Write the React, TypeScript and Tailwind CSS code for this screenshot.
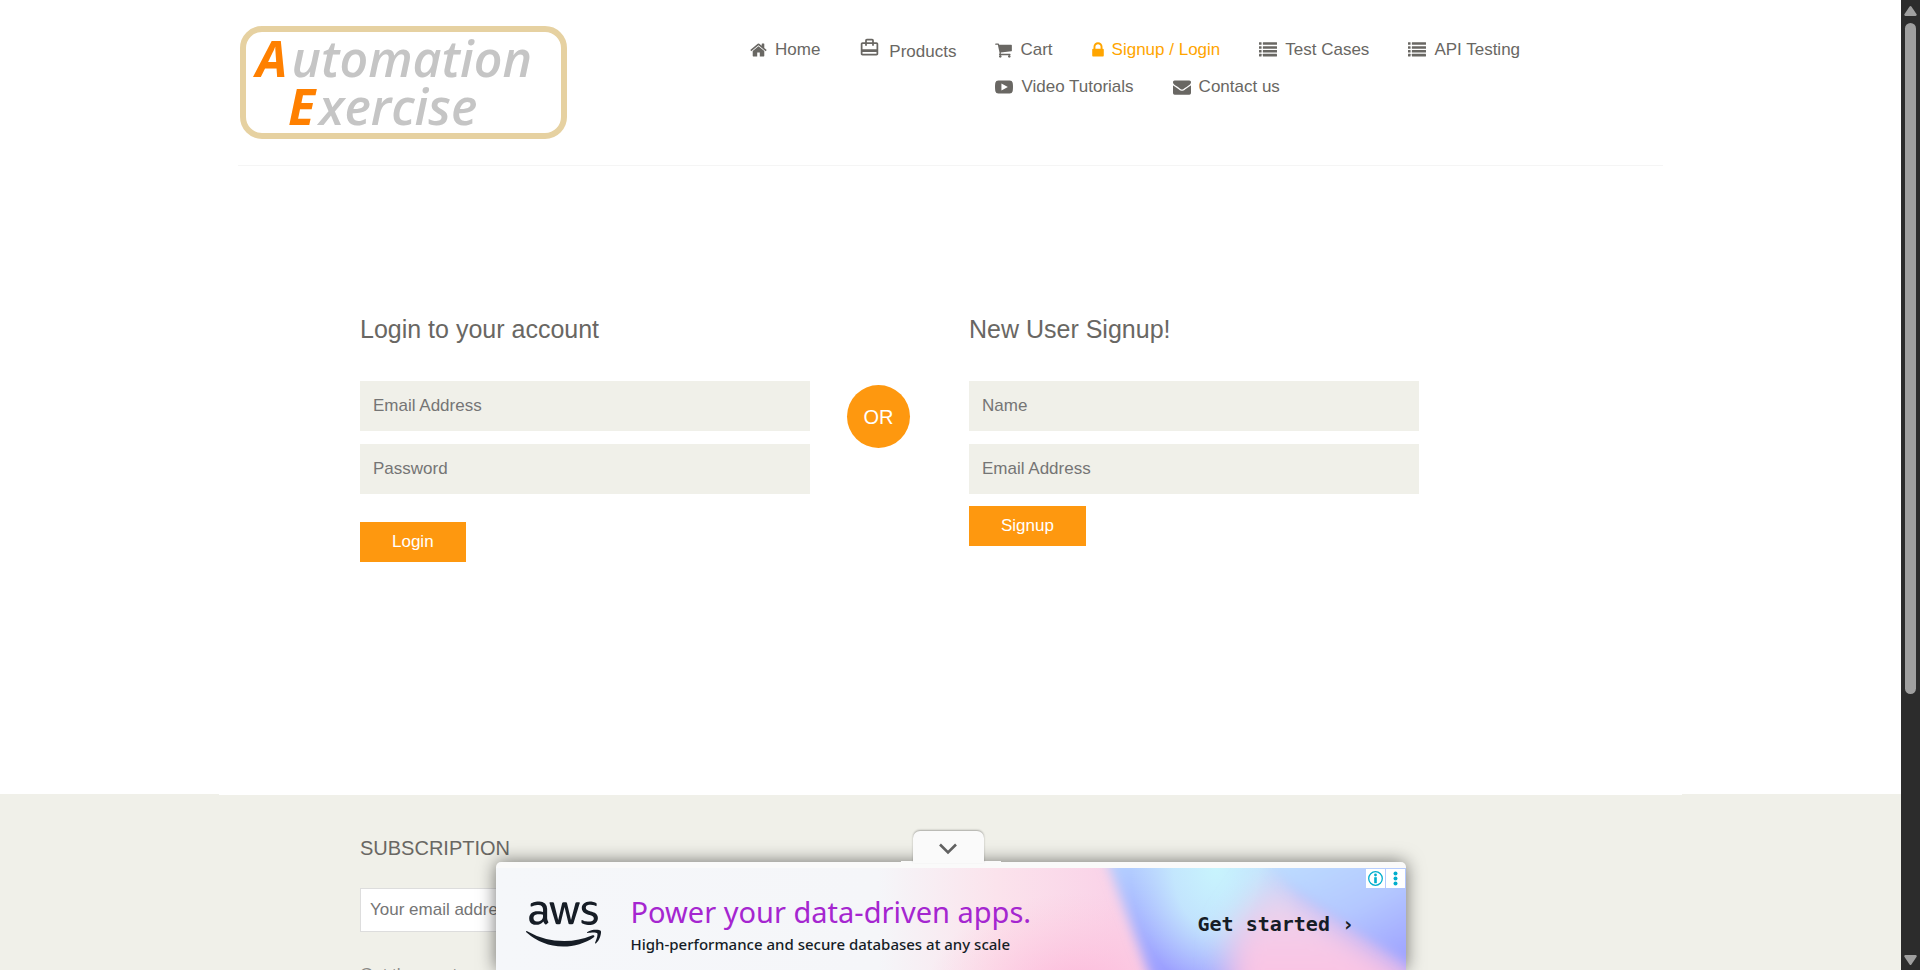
import type { ReactNode } from "react";
import { MdCardTravel } from "react-icons/md";
import { FaAws } from "react-icons/fa";

function HomeIcon() {
  return (
    <svg viewBox="64 0 1664 1792" className="h-[18px] w-[17px] fill-current" aria-hidden="true">
      <path d="M1472 992v480q0 26-19 45t-45 19h-384v-384h-256v384h-384q-26 0-45-19t-19-45v-480q0-1 .5-3t.5-3l575-474 575 474q1 2 1 6zm223-69l-62 74q-8 9-21 11h-3q-13 0-21-7l-692-577-692 577q-12 8-24 7-13-2-21-11l-62-74q-8-10-7-23.5t11-21.5l719-599q32-26 76-26t76 26l244 204v-195q0-14 9-23t23-9h192q14 0 23 9t9 23v408l219 182q10 8 11 21.5t-7 23.5z" />
    </svg>
  );
}

function CartIcon() {
  return (
    <svg viewBox="64 0 1664 1792" className="h-[18px] w-[17px] fill-current" aria-hidden="true">
      <path d="M704 1536q0 52-38 90t-90 38-90-38-38-90 38-90 90-38 90 38 38 90zm896 0q0 52-38 90t-90 38-90-38-38-90 38-90 90-38 90 38 38 90zm128-1088v512q0 24-16.5 42.5t-40.5 21.5l-1044 122q13 60 13 70 0 16-24 64h920q26 0 45 19t19 45-19 45-45 19h-1024q-26 0-45-19t-19-45q0-11 8-31.5t16-36 21.5-40 15.5-29.5l-177-823h-204q-26 0-45-19t-19-45 19-45 45-19h256q16 0 28.5 6.5t19.5 15.5 13 24.5 8 26 5.5 29.5 4.5 26h1201q26 0 45 19t19 45z" />
    </svg>
  );
}

function LockIcon() {
  return (
    <svg viewBox="320 0 1152 1792" className="h-[18px] w-[12px] fill-current" aria-hidden="true">
      <path d="M640 768h512v-192q0-106-75-181t-181-75-181 75-75 181v192zm832 96v576q0 40-28 68t-68 28h-960q-40 0-68-28t-28-68v-576q0-40 28-68t68-28h32v-192q0-184 132-316t316-132 316 132 132 316v192h32q40 0 68 28t28 68z" />
    </svg>
  );
}

function ListIcon() {
  const rows = [256, 640, 1024, 1408];
  return (
    <svg viewBox="0 0 1792 1792" className="h-[18px] w-[18px] fill-current" aria-hidden="true">
      {rows.map((y) => (
        <g key={y}>
          <rect x="0" y={y - 128} width="256" height="256" rx="32" />
          <rect x="384" y={y - 128} width="1408" height="256" rx="32" />
        </g>
      ))}
    </svg>
  );
}

function VideoIcon() {
  return (
    <svg viewBox="0 0 1792 1792" className="h-[18px] w-[18px] fill-current" aria-hidden="true">
      <path
        fillRule="evenodd"
        d="M330 256Q896 224 1462 256Q1700 262 1760 480Q1824 896 1760 1312Q1700 1530 1462 1536Q896 1568 330 1536Q92 1530 32 1312Q-32 896 32 480Q92 262 330 256ZM640 544V1248L1280 896Z"
      />
    </svg>
  );
}

function EnvelopeIcon() {
  return (
    <svg viewBox="0 0 1792 1792" className="h-[18px] w-[18px] fill-current" aria-hidden="true">
      <path d="M1792 710v794q0 66-47 113t-113 47h-1472q-66 0-113-47t-47-113v-794q44 49 101 87 362 246 497 345 57 42 92.5 65.5t94.5 48 110 24.5h2q51 0 110-24.5t94.5-48 92.5-65.5q170-123 498-345 57-39 100-87zm0-294q0 79-49 151t-122 123q-376 261-468 325-10 7-42.5 31t-54 38.5-52 32.5-57.5 27-50 9h-2q-23 0-50-9t-57.5-27-52-32.5-54-38.5-42.5-31q-91-64-262-182.5t-205-142.5q-62-42-117-115.5t-55-136.5q0-78 41.5-130t118.5-52h1472q65 0 112.5 47t47.5 113z" />
    </svg>
  );
}

function NavItem({ icon, label, active = false }: { icon: ReactNode; label: string; active?: boolean }) {
  return (
    <li>
      <a
        href="#"
        className={
          active
            ? "flex items-center gap-2 whitespace-nowrap text-[#ffa500]"
            : "flex items-center gap-2 whitespace-nowrap text-[#696763]"
        }
      >
        {icon}
        {label}
      </a>
    </li>
  );
}

function Logo() {
  return (
    <a
      href="#"
      aria-label="Automation Exercise"
      className="flex h-[113px] w-[327px] flex-col items-start rounded-[22px] border-6 border-[#e6d1a1] pt-[2px] pl-[10px] font-['Open_Sans',sans-serif] text-[50px] leading-[48px] font-semibold text-[#c5c5c5] italic"
    >
      <span className="flex gap-1">
        <span className="font-bold text-[#ff8000]">A</span>utomation
      </span>
      <span className="flex gap-1 pl-8">
        <span className="font-bold text-[#ff8000]">E</span>xercise
      </span>
    </a>
  );
}

function Header() {
  return (
    <header className="mx-auto w-full max-w-[1463px] px-[19px]">
      <div className="flex border-b border-[#f5f5f5] px-[2px] pt-[26px] pb-[26px]">
        <Logo />
        <nav className="ml-[183px] pt-[11px] text-[17px] leading-[25px]">
          <div className="flex gap-[39px]">
            <ul className="flex gap-[39px]">
              <NavItem icon={<HomeIcon />} label="Home" />
              <li>
                <a href="#" className="flex gap-[9px] text-[#696763]">
                  <MdCardTravel className="h-[21px] w-[21px]" aria-hidden="true" />
                  <span className="pt-[2px]">Products</span>
                </a>
              </li>
            </ul>
            <div className="flex flex-col gap-3">
              <ul className="flex gap-[39px]">
                <NavItem icon={<CartIcon />} label="Cart" />
                <NavItem icon={<LockIcon />} label="Signup / Login" active />
                <NavItem icon={<ListIcon />} label="Test Cases" />
                <NavItem icon={<ListIcon />} label="API Testing" />
              </ul>
              <ul className="flex gap-[39px]">
                <NavItem icon={<VideoIcon />} label="Video Tutorials" />
                <NavItem icon={<EnvelopeIcon />} label="Contact us" />
              </ul>
            </div>
          </div>
        </nav>
      </div>
    </header>
  );
}

const fieldClass =
  "block h-[50px] w-full bg-[#f0f0e9] px-[13px] text-[17px] text-[#696763] outline-none placeholder:text-[#757575]";
const buttonClass = "h-10 bg-[#fe980f] px-8 text-[17px] text-white";

function Forms() {
  return (
    <section className="mx-auto flex w-full max-w-[1463px] items-start pt-[148px] pr-[263px] pb-[232px] pl-[141px]">
      <form className="flex flex-1 flex-col items-start" onSubmit={(e) => e.preventDefault()}>
        <h2 className="mb-[37px] text-[25px] leading-[30px] text-[#696763]">Login to your account</h2>
        <div className="mb-7 flex w-full flex-col gap-[13px]">
          <input type="email" aria-label="Email Address" placeholder="Email Address" className={fieldClass} />
          <input type="password" aria-label="Password" placeholder="Password" className={fieldClass} />
        </div>
        <button type="submit" className={buttonClass}>
          Login
        </button>
      </form>
      <h2 className="mt-[71px] mr-[59px] ml-[37px] flex size-[63px] items-center justify-center rounded-full bg-[#fe980f] text-[20px] text-white">
        OR
      </h2>
      <form className="flex flex-1 flex-col items-start" onSubmit={(e) => e.preventDefault()}>
        <h2 className="mb-[37px] text-[25px] leading-[30px] text-[#696763]">New User Signup!</h2>
        <div className="mb-3 flex w-full flex-col gap-[13px]">
          <input type="text" aria-label="Name" placeholder="Name" className={fieldClass} />
          <input type="email" aria-label="Email Address" placeholder="Email Address" className={fieldClass} />
        </div>
        <button type="submit" className={buttonClass}>
          Signup
        </button>
      </form>
    </section>
  );
}

function Footer() {
  return (
    <footer className="bg-[#f0f0e9]">
      <div className="mx-auto h-px w-full max-w-[1463px] bg-white" />
      <div className="mx-auto w-full max-w-[1463px] px-[141px] pt-[41px] pb-10">
        <h2 className="mb-[27px] text-[20px] leading-[25px] text-[#696763] uppercase">Subscription</h2>
        <form className="mb-[30px] flex" onSubmit={(e) => e.preventDefault()}>
          <input
            type="email"
            aria-label="Your email address"
            placeholder="Your email address"
            className="h-11 w-[268px] border border-[#dddddd] bg-white px-[9px] text-[17px] outline-none placeholder:text-[#757575]"
          />
          <button type="submit" aria-label="Subscribe" className="h-11 w-[50px] bg-[#fe980f]" />
        </form>
        <p className="text-[17px] leading-[25px] text-[#8b8a86]">
          Get the most recent updates from
          <br />
          our site and be updated your self...
        </p>
      </div>
    </footer>
  );
}

function AdArtwork() {
  return (
    <svg viewBox="0 0 910 112" preserveAspectRatio="none" className="absolute inset-0 h-full w-full" aria-hidden="true">
      <defs>
        <linearGradient id="base" x1="0" x2="1" y1="0" y2="0">
          <stop offset="0" stopColor="#f5f7fa" />
          <stop offset="0.42" stopColor="#f5f6f9" />
          <stop offset="0.55" stopColor="#fbe3ec" />
          <stop offset="0.68" stopColor="#fad2e8" />
        </linearGradient>
        <radialGradient id="pinkGlow">
          <stop offset="0" stopColor="#fdb8da" />
          <stop offset="1" stopColor="#fdc8de" stopOpacity="0" />
        </radialGradient>
        <linearGradient id="blue" x1="0" x2="0" y1="0" y2="1">
          <stop offset="0" stopColor="#b7d6ff" />
          <stop offset="1" stopColor="#9795ff" />
        </linearGradient>
        <linearGradient id="rightBlue" x1="0.2" x2="0.9" y1="0" y2="1">
          <stop offset="0" stopColor="#bfe2ff" />
          <stop offset="0.5" stopColor="#b4c8ff" />
          <stop offset="1" stopColor="#9795ff" />
        </linearGradient>
        <linearGradient id="wedge" x1="0" x2="0" y1="0" y2="1">
          <stop offset="0" stopColor="#dfdcf2" />
          <stop offset="0.5" stopColor="#f8c8e6" />
          <stop offset="1" stopColor="#fdc0e0" />
        </linearGradient>
        <radialGradient id="cyan">
          <stop offset="0" stopColor="#c8f4fd" />
          <stop offset="0.5" stopColor="#c8eefd" stopOpacity="0.8" />
          <stop offset="1" stopColor="#c8e4fd" stopOpacity="0" />
        </radialGradient>
        <filter id="soft" x="-20%" y="-50%" width="140%" height="200%">
          <feGaussianBlur stdDeviation="6" />
        </filter>
        <filter id="softer" x="-30%" y="-60%" width="160%" height="220%">
          <feGaussianBlur stdDeviation="15" />
        </filter>
      </defs>
      <rect width="910" height="112" fill="url(#base)" />
      <ellipse cx="580" cy="125" rx="150" ry="100" fill="url(#pinkGlow)" />
      <path d="M606 -20L660 125H960V-20Z" fill="url(#blue)" filter="url(#soft)" />
      <ellipse cx="720" cy="0" rx="85" ry="125" fill="url(#cyan)" />
      <path d="M730 150L735 65L775 10L940 120V150Z" fill="url(#wedge)" filter="url(#softer)" />
      <path d="M755 -30L795 18L940 112V-30Z" fill="url(#rightBlue)" filter="url(#soft)" />
    </svg>
  );
}

function AdBanner() {
  return (
    <aside aria-label="Advertisement" className="absolute inset-x-0 bottom-0 mx-auto h-[108px] w-[910px]">
      <div className="absolute -top-px left-1/2 h-px w-[100px] -translate-x-1/2 bg-[#fafafa]" />
      <div className="h-full rounded-t-[5px] bg-[#fafafa] pt-[6px] shadow-[0_0_18px_rgba(0,0,0,0.55)]">
        <div className="relative h-[112px]">
          <AdArtwork />
          <a href="#" className="relative flex h-[112px] items-center pl-[30px] text-[#161d26]">
            <FaAws className="h-[60px] w-[75px]" aria-hidden="true" />
            <span className="ml-[30px] w-[500px] pt-1 font-['Noto_Sans',sans-serif]">
              <span className="block text-[29px] leading-9 whitespace-nowrap text-[#a526d0]">
                Power your data-driven apps.
              </span>
              <span className="block text-[15px] leading-7 font-medium whitespace-nowrap">
                High-performance and secure databases at any scale
              </span>
            </span>
            <span className="ml-[67px] font-['DejaVu_Sans_Mono',monospace] text-[20px] font-bold whitespace-nowrap">
              Get started ›
            </span>
          </a>
          <div className="absolute top-px right-px flex gap-px">
            <button type="button" aria-label="Ad information" className="size-[19px] bg-white">
              <svg viewBox="0 0 19 19" className="size-full" aria-hidden="true">
                <circle cx="9.5" cy="9.5" r="6.8" fill="none" stroke="#00aecd" strokeWidth="1.3" />
                <circle cx="9.5" cy="6" r="1.4" fill="#00aecd" />
                <rect x="8.2" y="8.2" width="2.6" height="6" fill="#00aecd" />
              </svg>
            </button>
            <button type="button" aria-label="Ad options" className="size-[19px] bg-white">
              <svg viewBox="0 0 19 19" className="size-full fill-[#00aecd]" aria-hidden="true">
                <circle cx="9.5" cy="4.5" r="2" />
                <circle cx="9.5" cy="9.5" r="2" />
                <circle cx="9.5" cy="14.5" r="2" />
              </svg>
            </button>
          </div>
        </div>
      </div>
      <button
        type="button"
        aria-label="Collapse advertisement"
        className="absolute -top-[31px] left-[417px] flex h-8 w-[71px] items-center justify-center rounded-t-[7px] bg-[#fafafa] shadow-[0_-1px_2px_rgba(0,0,0,0.3)]"
      >
        <svg viewBox="0 0 20 12" className="mt-1 h-3 w-5" aria-hidden="true">
          <path d="M2 1.5L10 9.5L18 1.5" fill="none" stroke="#616161" strokeWidth="2.6" />
        </svg>
      </button>
    </aside>
  );
}

function ScrollBar() {
  return (
    <div className="flex w-[19px] shrink-0 flex-col items-center bg-[#2c2c2c] pt-[6px] pb-[5px]" aria-hidden="true">
      <svg viewBox="0 0 13 10" className="h-[10px] w-[13px] fill-[#9f9f9f]">
        <path d="M5.6 .6Q6.5-.4 7.4 .6L12.6 8.2Q13 9.8 11.6 10H1.4Q0 9.8 .4 8.2Z" />
      </svg>
      <div className="mt-[7px] h-[70%] w-[11px] rounded-full bg-[#9f9f9f]" />
      <svg viewBox="0 0 13 10" className="mt-auto h-[10px] w-[13px] fill-[#9f9f9f]">
        <path d="M5.6 9.4Q6.5 10.4 7.4 9.4L12.6 1.8Q13 .2 11.6 0H1.4Q0 .2 .4 1.8Z" />
      </svg>
    </div>
  );
}

export default function App() {
  return (
    <div className="flex h-screen overflow-hidden bg-white font-['Liberation_Sans',Arial,sans-serif]">
      <div className="relative min-w-0 flex-1 overflow-hidden">
        <Header />
        <main>
          <Forms />
        </main>
        <Footer />
        <AdBanner />
      </div>
      <ScrollBar />
    </div>
  );
}
